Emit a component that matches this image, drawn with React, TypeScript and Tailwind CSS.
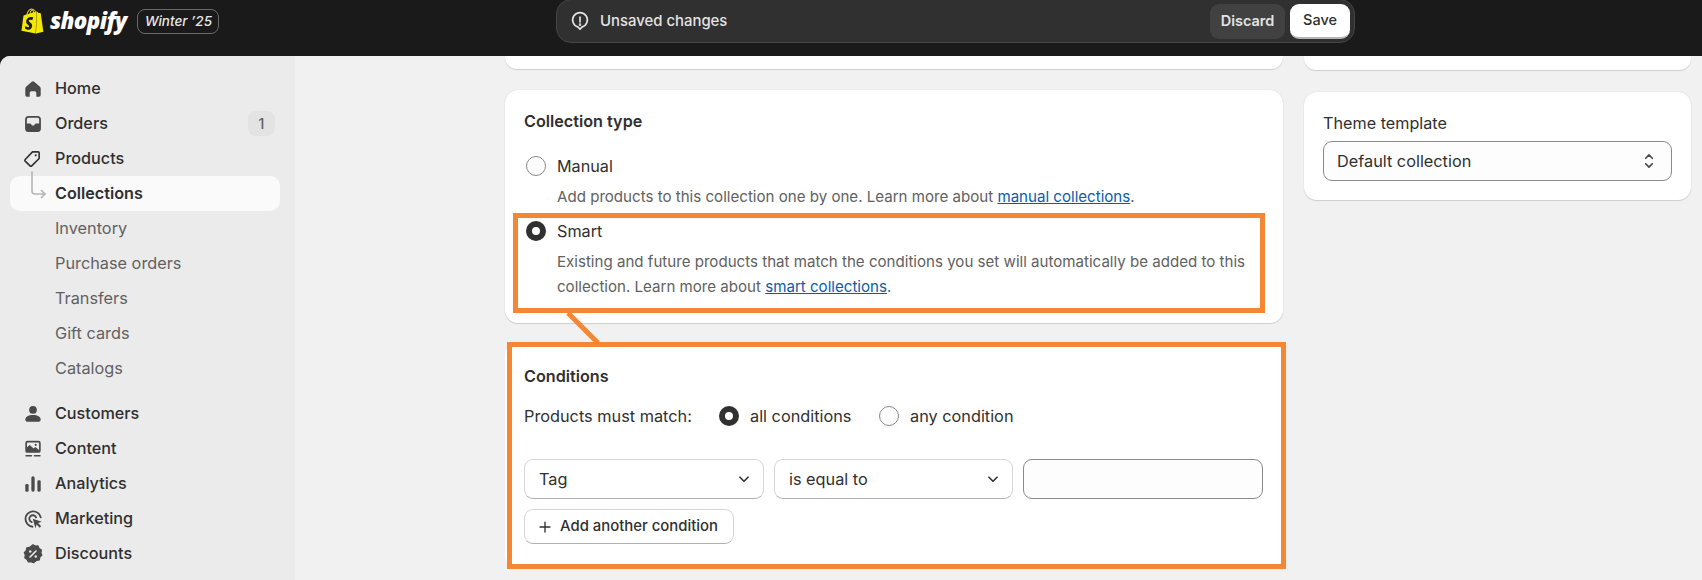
import { SiShopify } from 'react-icons/si'

function HomeIcon() {
  return (
    <svg viewBox="0 0 20 20" className="w-[22px] h-[22px]" fill="#4a4a4a">
      <path d="M3 9.600a2.500 2.500 0 0 1 .9-1.900l5-4.200a1.700 1.700 0 0 1 2.200 0l5 4.200a2.500 2.500 0 0 1 .9 1.900v5.900a1.500 1.500 0 0 1-1.500 1.500H13v-3.500a1.500 1.500 0 0 0-1.500-1.500h-3A1.500 1.500 0 0 0 7 13.500V17H4.500A1.500 1.500 0 0 1 3 15.500z" />
    </svg>
  )
}

function OrdersIcon() {
  return (
    <svg viewBox="0 0 20 20" className="w-[22px] h-[22px]" fill="#4a4a4a">
      <path fillRule="evenodd" d="M6 2.800h8A3.200 3.200 0 0 1 17.200 6v8a3.200 3.200 0 0 1-3.200 3.200H6A3.200 3.200 0 0 1 2.800 14V6A3.200 3.200 0 0 1 6 2.800zM6 4.400A1.600 1.600 0 0 0 4.400 6v3.500h2.700c.6 0 1.100.3 1.300.8l.3.600c.1.200.3.400.6.400h1.400c.3 0 .5-.2.6-.4l.3-.6c.2-.5.7-.8 1.300-.8h2.700V6A1.600 1.600 0 0 0 14 4.400z" />
    </svg>
  )
}

function TagIcon() {
  return (
    <svg viewBox="0 0 20 20" className="w-[19px] h-[19px] -ml-[1px]" fill="none" stroke="#303030" strokeWidth="1.700" strokeLinejoin="round">
      <path d="M2.300 11 10 3h6a1 1 0 0 1 1 1v6l-7.800 7.700a1.300 1.300 0 0 1-1.800 0l-5.100-4.900a1.300 1.300 0 0 1 0-1.800z" />
      <circle cx="13.400" cy="6.700" r="1.100" fill="#303030" stroke="none" />
    </svg>
  )
}

function CustomersIcon() {
  return (
    <svg viewBox="0 0 20 20" className="w-[22px] h-[22px]" fill="#4a4a4a">
      <circle cx="10" cy="6.300" r="3.500" />
      <path d="M3 15.300c0-2.700 2.800-4.300 7-4.300s7 1.600 7 4.300c0 1-.8 1.700-1.700 1.700H4.700C3.800 17 3 16.300 3 15.300z" />
    </svg>
  )
}

function ContentIcon() {
  return (
    <svg viewBox="0 0 20 20" className="w-[22px] h-[22px]" fill="#4a4a4a">
      <path fillRule="evenodd" d="M5 2.500h10A2 2 0 0 1 17 4.500v7a2 2 0 0 1-2 2H5a2 2 0 0 1-2-2v-7a2 2 0 0 1 2-2zM4.500 8.500 7 6.300l3.600 3.200 1.500-1.300 3.400 2.600V4.800a.8.800 0 0 0-.8-.8H5.300a.8.800 0 0 0-.8.800z" />
      <circle cx="12.500" cy="6.200" r="1" />
      <rect x="3" y="15.500" width="6.300" height="1.400" rx=".7" />
      <rect x="10.700" y="15.500" width="6.300" height="1.400" rx=".7" />
    </svg>
  )
}

function AnalyticsIcon() {
  return (
    <svg viewBox="0 0 20 20" className="w-[22px] h-[22px]" fill="#4a4a4a">
      <rect x="3" y="10" width="3" height="7" rx="1.200" />
      <rect x="8.500" y="3" width="3" height="14" rx="1.500" />
      <rect x="14" y="6.500" width="3" height="10.500" rx="1.300" />
    </svg>
  )
}

function MarketingIcon() {
  return (
    <svg viewBox="0 0 20 20" className="w-[22px] h-[22px]">
      <path d="M17 8.500A7 7 0 1 0 9.500 17" fill="none" stroke="#4a4a4a" strokeWidth="1.700" strokeLinecap="round" />
      <path d="M12.800 8.600A3.200 3.200 0 1 0 8.800 12.800" fill="none" stroke="#4a4a4a" strokeWidth="1.700" strokeLinecap="round" />
      <path d="M9.800 9.800l8.200 2.700-3.400 1.200 2.800 2.900-1.300 1.300-2.800-2.900-1.100 3.400z" fill="#4a4a4a" />
    </svg>
  )
}

function DiscountsIcon() {
  return (
    <svg viewBox="0 0 20 20" className="w-[22px] h-[22px]">
      <path d="M10 1.500l2.100 1.300 2.500-.2 1 2.300 2.100 1.400-.5 2.500.9 2.300-1.800 1.800-.5 2.500-2.500.4L10.500 18l-2.300-1-2.500.3-1.100-2.300L2.500 13.500l.5-2.500-1-2.300 1.800-1.800.5-2.500 2.500-.4z" fill="#4a4a4a" stroke="#4a4a4a" strokeLinejoin="round" />
      <path d="M7.300 12.700l5.400-5.400" stroke="#ebebeb" strokeWidth="1.500" strokeLinecap="round" />
      <circle cx="7.500" cy="7.700" r="1.100" fill="#ebebeb" />
      <circle cx="12.500" cy="12.300" r="1.100" fill="#ebebeb" />
    </svg>
  )
}

function NavRow({ label, icon, badge }: { label: string; icon: React.ReactNode; badge?: string }) {
  return (
    <div className="flex items-center h-[35px] pl-[12px] pr-[5px]">
      <span className="w-[22px] h-[22px] mr-[11px] flex items-center justify-center">{icon}</span>
      <span className="text-[16.200px] font-medium text-[#303030]">{label}</span>
      {badge && (
        <span className="ml-auto w-[27px] h-[25px] rounded-[8px] bg-[#e3e3e3] flex items-center justify-center text-[14px] font-medium text-[#616161]">
          {badge}
        </span>
      )}
    </div>
  )
}

function SubRow({ label }: { label: string }) {
  return <div className="flex items-center h-[35px] pl-[45px] text-[16.300px] font-normal text-[#616161]">{label}</div>
}

function Radio({ checked }: { checked?: boolean }) {
  return checked ? (
    <span className="block w-[20px] h-[20px] rounded-full border-[6px] border-[#303030] bg-white shrink-0" />
  ) : (
    <span className="block w-[20px] h-[20px] rounded-full border border-[#8a8a8a] bg-[#fdfdfd] shrink-0" />
  )
}

function Chevron() {
  return (
    <svg viewBox="0 0 20 20" className="w-[18px] h-[18px]" fill="none" stroke="#303030" strokeWidth="1.800" strokeLinecap="round" strokeLinejoin="round">
      <path d="M5.500 8l4.500 4.500L14.500 8" />
    </svg>
  )
}

function SelectBox({ label, w }: { label: string; w: string }) {
  return (
    <div className={`flex items-center justify-between h-[40px] ${w} pl-[14px] pr-[10px] rounded-[9px] border border-[#d6d6d6] border-b-[#b0b0b0] bg-white text-[16.300px] text-[#303030]`}>
      <span>{label}</span>
      <Chevron />
    </div>
  )
}

export default function App() {
  return (
    <div className="relative h-[580px] w-[1702px] overflow-hidden bg-[#1a1a1a] font-['Inter',sans-serif]">
      {/* Top bar */}
      <div className="flex items-start h-[56px] relative">
        <div className="flex items-center h-[42px] pl-[20px] w-[556px] shrink-0">
          <SiShopify className="w-[25px] h-[28px] text-[#f5e800]" />
          <span className="ml-[5px] text-[22.300px] leading-none font-extrabold italic tracking-[-0.6px] text-white font-['Open_Sans',sans-serif]">shopify</span>
          <span className="ml-[11px] h-[25px] w-[82px] flex items-center justify-center rounded-[8px] border border-[#6a6a6a] text-[13.500px] italic font-medium text-[#e8e8e8]">
            Winter ’25
          </span>
        </div>
        <div className="flex items-center w-[799px] h-[44px] -mt-[1px] rounded-[15px] border border-[#454545] bg-[#303030] pl-[12px] pr-[4px]">
          <svg viewBox="0 0 20 20" className="w-[22px] h-[22px]" fill="none" stroke="#e3e3e3" strokeWidth="1.500" strokeLinecap="round">
            <path d="M10 17.500l-1.700-1.900A6.700 6.700 0 1 1 11.700 15.600z" strokeLinejoin="round" />
            <path d="M10 6.500v4.500" />
            <circle cx="10" cy="13.300" r=".4" />
          </svg>
          <span className="ml-[9px] text-[14.900px] font-medium text-[#e3e3e3]">Unsaved changes</span>
          <button className="ml-auto h-[35px] w-[75px] rounded-[9px] bg-[#414141] text-[14.500px] font-semibold text-[#e3e3e3]">Discard</button>
          <button className="ml-[5px] h-[35px] w-[60px] rounded-[9px] bg-white border-b-2 border-[#b5b5b5] text-[14.500px] font-medium text-[#303030]">Save</button>
        </div>
      </div>

      <div className="flex h-[524px] rounded-tl-[10px] overflow-hidden bg-[#f1f1f1]">
        {/* Sidebar */}
        <div className="w-[295px] shrink-0 bg-[#ebebeb] pt-[15px] pl-[10px] pr-[15px]">
          <NavRow label="Home" icon={<HomeIcon />} />
          <NavRow label="Orders" icon={<OrdersIcon />} badge="1" />
          <NavRow label="Products" icon={<TagIcon />} />
          <div className="relative flex items-center h-[35px] pl-[45px] rounded-[10px] bg-[#fafafa] text-[16.200px] font-semibold text-[#303030]">
            Collections
            <svg className="absolute left-[20px] -top-[5px] w-[18px] h-[30px]" viewBox="0 0 18 30" fill="none" stroke="#b5b5b5" strokeWidth="1.600" strokeLinecap="round" strokeLinejoin="round">
              <path d="M2 1v19a3 3 0 0 0 3 3h10" />
              <path d="M11.500 19.500L15 23l-3.500 3.500" />
            </svg>
          </div>
          <SubRow label="Inventory" />
          <SubRow label="Purchase orders" />
          <SubRow label="Transfers" />
          <SubRow label="Gift cards" />
          <SubRow label="Catalogs" />
          <div className="h-[10px]" />
          <NavRow label="Customers" icon={<CustomersIcon />} />
          <NavRow label="Content" icon={<ContentIcon />} />
          <NavRow label="Analytics" icon={<AnalyticsIcon />} />
          <NavRow label="Marketing" icon={<MarketingIcon />} />
          <NavRow label="Discounts" icon={<DiscountsIcon />} />
        </div>

        {/* Main */}
        <div className="flex gap-[21px] pl-[210px] text-[#303030]">
          <div className="w-[778px] flex flex-col gap-[21px]">
            <div className="h-[13px] rounded-b-[12px] bg-white shadow-[0_1px_1px_#cfcfcf]" />
            <div className="h-[233px] rounded-[13px] bg-white shadow-[0_0_1px_#c4c4c4,0_1px_1px_#cfcfcf] pt-[21px] px-[19px]">
              <h2 className="text-[16.200px] leading-[20px] font-semibold">Collection type</h2>
              <div className="mt-[25px] flex items-center gap-[11px] h-[20px] ml-[2px]">
                <Radio />
                <span className="text-[16.200px]">Manual</span>
              </div>
              <p className="mt-[11px] ml-[33px] text-[15.100px] leading-[20px] text-[#616161]">
                Add products to this collection one by one. Learn more about{' '}
                <span className="text-[#0b5cad] underline">manual collections</span>.
              </p>
              <div className="mt-[14px] flex items-center gap-[11px] h-[20px] ml-[2px]">
                <Radio checked />
                <span className="text-[16.200px]">Smart</span>
              </div>
              <p className="mt-[8px] ml-[33px] text-[15.100px] leading-[25px] text-[#616161]">
                Existing and future products that match the conditions you set will automatically be added to this collection. Learn more about{' '}
                <span className="text-[#0b5cad] underline">smart collections</span>.
              </p>
            </div>
            <div className="h-[225px] -mt-px rounded-[13px] bg-white pt-[23px] px-[19px]">
              <h2 className="text-[16.200px] leading-[20px] font-semibold">Conditions</h2>
              <div className="mt-[20px] flex items-center h-[20px] text-[16.300px]">
                <span className="w-[195px]">Products must match:</span>
                <Radio checked />
                <span className="ml-[11px] w-[129px]">all conditions</span>
                <Radio />
                <span className="ml-[11px]">any condition</span>
              </div>
              <div className="mt-[33px] flex gap-[10px]">
                <SelectBox label="Tag" w="w-[240px]" />
                <SelectBox label="is equal to" w="w-[239px]" />
                <div className="h-[40px] w-[240px] rounded-[9px] border border-[#8a8a8a] bg-[#fdfdfd]" />
              </div>
              <button className="mt-[10px] flex items-center gap-[6px] h-[35px] w-[210px] pl-[11px] rounded-[9px] border border-[#d6d6d6] border-b-[#b0b0b0] bg-white text-[14.900px] font-medium">
                <svg viewBox="0 0 20 20" className="w-[18px] h-[18px]" fill="none" stroke="#303030" strokeWidth="1.500" strokeLinecap="round">
                  <path d="M10 4.500v11M4.500 10h11" />
                </svg>
                Add another condition
              </button>
            </div>
          </div>

          <div className="w-[387px] flex flex-col gap-[22px]">
            <div className="h-[14px] rounded-b-[12px] bg-white shadow-[0_1px_1px_#cfcfcf]" />
            <div className="h-[108px] rounded-[13px] bg-white shadow-[0_0_1px_#c4c4c4,0_1px_1px_#cfcfcf] pt-[21px] px-[19px]">
              <div className="text-[16.200px] leading-[20px]">Theme template</div>
              <div className="mt-[8px] flex items-center justify-between h-[40px] pl-[13px] pr-[11px] rounded-[9px] border border-[#8a8a8a] bg-[#fdfdfd] text-[16.300px]">
                <span>Default collection</span>
                <svg viewBox="0 0 20 20" className="w-[22px] h-[22px]" fill="none" stroke="#4a4a4a" strokeWidth="1.500" strokeLinecap="round" strokeLinejoin="round">
                  <path d="M7 7.500l3-3 3 3M7 12.500l3 3 3-3" />
                </svg>
              </div>
            </div>
          </div>
        </div>
      </div>

      {/* Orange annotation callouts */}
      <div className="absolute left-[513px] top-[213px] w-[752px] h-[100px] border-[5px] border-[#f48634]" />
      <div className="absolute left-[507px] top-[342px] w-[779px] h-[227px] border-[5px] border-[#f48634]" />
      <svg className="absolute left-[560px] top-[308px] w-[45px] h-[40px]" viewBox="0 0 45 40">
        <path d="M8 5l30 30" stroke="#f48634" strokeWidth="5" />
      </svg>
    </div>
  )
}
